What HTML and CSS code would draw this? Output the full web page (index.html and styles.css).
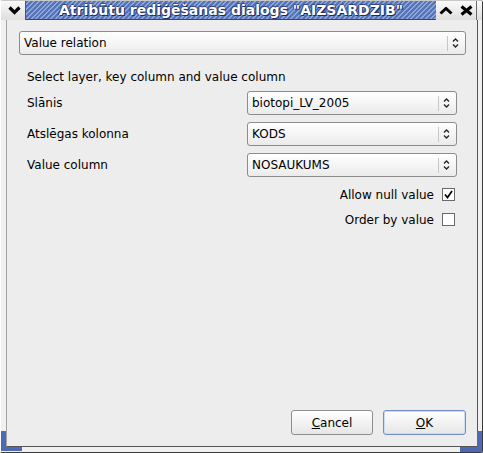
FILE: index.html
```html
<!DOCTYPE html>
<html>

<head>
  <title>Atribūtu rediģēšanas dialogs</title>
  <link rel="stylesheet" href="styles.css">
</head>

<body>
  <div class="window">
    <div class="titlebar">
      <div class="tb-button tb-menu">
        <svg width="13" height="9" viewBox="0 0 13 9">
          <path d="M1.5 1.5 L6.5 6.5 L11.5 1.5" fill="none" stroke="#000" stroke-width="3.2" />
        </svg>
      </div>
      <div class="tb-title">Atribūtu rediģēšanas dialogs "AIZSARDZIB"</div>
      <div class="tb-button">
        <svg width="14" height="8" viewBox="0 0 14 8">
          <path d="M1.5 6.5 L7 1.5 L12.5 6.5" fill="none" stroke="#000" stroke-width="3" />
        </svg>
      </div>
      <div class="tb-button">
        <svg width="13" height="11" viewBox="0 0 13 11">
          <path d="M1.5 1.5 L11.5 9.5 M11.5 1.5 L1.5 9.5" fill="none" stroke="#000" stroke-width="3.2" />
        </svg>
      </div>
      <div class="tb-edge"></div>
    </div>

    <div class="frame">
      <div class="client">
        <div class="combo combo-wide">
          <span class="combo-text">Value relation</span>
          <span class="combo-arrow">
            <svg width="7" height="12" viewBox="0 0 7 12">
              <path d="M1 4.5 L3.5 2 L6 4.5 M1 7.5 L3.5 10 L6 7.5" fill="none" stroke="#222" stroke-width="1.3" />
            </svg>
          </span>
        </div>

        <div class="settings">
          <p class="hint">Select layer, key column and value column</p>

          <div class="field">
            <span class="field-label">Slānis</span>
            <div class="combo">
              <span class="combo-text">biotopi_LV_2005</span>
              <span class="combo-arrow">
                <svg width="7" height="12" viewBox="0 0 7 12">
                  <path d="M1 4.5 L3.5 2 L6 4.5 M1 7.5 L3.5 10 L6 7.5" fill="none" stroke="#222" stroke-width="1.3" />
                </svg>
              </span>
            </div>
          </div>

          <div class="field">
            <span class="field-label">Atslēgas kolonna</span>
            <div class="combo">
              <span class="combo-text">KODS</span>
              <span class="combo-arrow">
                <svg width="7" height="12" viewBox="0 0 7 12">
                  <path d="M1 4.5 L3.5 2 L6 4.5 M1 7.5 L3.5 10 L6 7.5" fill="none" stroke="#222" stroke-width="1.3" />
                </svg>
              </span>
            </div>
          </div>

          <div class="field">
            <span class="field-label">Value column</span>
            <div class="combo">
              <span class="combo-text">NOSAUKUMS</span>
              <span class="combo-arrow">
                <svg width="7" height="12" viewBox="0 0 7 12">
                  <path d="M1 4.5 L3.5 2 L6 4.5 M1 7.5 L3.5 10 L6 7.5" fill="none" stroke="#222" stroke-width="1.3" />
                </svg>
              </span>
            </div>
          </div>

          <div class="checks">
            <div class="check-row">
              Allow null value
              <span class="checkbox">
                <svg width="11" height="11" viewBox="0 0 11 11">
                  <path d="M2 5.5 L4.5 8.5 L9 2" fill="none" stroke="#000" stroke-width="1.7" />
                </svg>
              </span>
            </div>
            <div class="check-row">
              Order by value
              <span class="checkbox"></span>
            </div>
          </div>
        </div>

        <div class="buttons">
          <button class="btn btn-cancel"><u>C</u>ancel</button>
          <button class="btn btn-ok"><u>O</u>K</button>
        </div>
      </div>
    </div>

    <!-- blue resize grips in the bottom corners -->
    <span class="grip grip-left"></span>
    <span class="grip grip-right"></span>
  </div>
</body>

</html>
```

FILE: styles.css
```css
body {
  margin: 0;
  background: #ffffff;
  font-family: "DejaVu Sans", "Liberation Sans", sans-serif;
  font-size: 12px;
  color: #000000;
}

.window {
  position: relative;
  width: 483px;
  height: 453px;
  box-sizing: border-box;
  display: flex;
  flex-direction: column;
  background: #eeeeee;
  border-right: 1px solid #3a3a3a;
  border-bottom: 1px solid #3a3a3a;
  border-radius: 3px 3px 2px 2px;
  overflow: hidden;
}

/* title bar */
.titlebar {
  height: 20px;
  display: flex;
  background: linear-gradient(#fafafa, #dedede);
  border-top: 1px solid #c8c8c8;
  box-sizing: border-box;
}

.tb-button {
  width: 20px;
  display: flex;
  align-items: center;
  justify-content: center;
}

.tb-menu {
  width: 26px;
  border-left: 1px solid #ffffff;
  border-right: 1px solid #555555;
  box-sizing: border-box;
  padding-left: 2px;
}

.tb-title {
  flex: 1;
  height: 18px;
  background: repeating-linear-gradient(135deg, #5674b8 0px, #5674b8 2px, #8ea6da 2px, #8ea6da 3.4px);
  border-bottom: 1px solid #33467a;
  color: #ffffff;
  font-weight: bold;
  font-size: 14px;
  line-height: 18px;
  text-align: center;
  text-shadow: 1px 1px 0 #1c2c5c, -1px 0 1px #2b3f78, 0 -1px 1px #2b3f78;
  white-space: nowrap;
  overflow: hidden;
}

.tb-edge {
  width: 5px;
  border-left: 1px solid #6a6a6a;
}

/* window frame around the client area */
.frame {
  flex: 1;
  display: flex;
  padding: 0 5px 5px 5px;
  background: #f0f0f0;
  border-left: 1px solid #ffffff;
}

.client {
  flex: 1;
  display: flex;
  flex-direction: column;
  background: #ededed;
  border-left: 1px solid #a2a2a2;
  border-right: 1px solid #555555;
  border-bottom: 1px solid #555555;
}

/* combo boxes */
.combo {
  display: flex;
  align-items: center;
  height: 24px;
  box-sizing: border-box;
  border: 1px solid #8c8c8c;
  border-radius: 3px;
  background: linear-gradient(#ffffff, #ebebeb);
}

.combo-text {
  flex: 1;
  padding-left: 4px;
  white-space: nowrap;
}

.combo-arrow {
  width: 15px;
  height: 15px;
  padding-right: 2px;
  border-left: 1px solid #c6c6c6;
  display: flex;
  align-items: center;
  justify-content: center;
}

.combo-wide {
  margin: 11px 11px 0 12px;
}

.settings {
  display: flex;
  flex-direction: column;
  gap: 7px;
  padding: 0 20px;
  margin-top: 13px;
}

.hint {
  margin: 0 0 -1px 0;
  padding-top: 1px;
  line-height: 16px;
}

.field {
  display: grid;
  grid-template-columns: 220px 210px;
  align-items: center;
}

.checks {
  display: flex;
  flex-direction: column;
  align-items: flex-end;
  gap: 8px;
  margin-top: 2px;
}

.check-row {
  display: flex;
  align-items: center;
  gap: 8px;
  height: 17px;
  padding-right: 2px;
}

.checkbox {
  width: 13px;
  height: 13px;
  box-sizing: border-box;
  border: 1px solid #6a6a6a;
  background: #ffffff;
  display: flex;
  align-items: center;
  justify-content: center;
}

/* dialog buttons */
.buttons {
  margin-top: auto;
  display: flex;
  justify-content: flex-end;
  gap: 10px;
  padding: 0 11px 11px 0;
}

.btn {
  height: 25px;
  font-family: inherit;
  font-size: 12px;
  color: #000000;
  border: 1px solid #8e8e8e;
  border-radius: 3px;
  background: linear-gradient(#ffffff, #e6e6e6);
  padding: 0;
}

.btn-cancel {
  width: 82px;
}

.btn-ok {
  width: 83px;
  border-color: #6f90c6;
  box-shadow: inset 0 0 0 1px #cddcf2;
}

.grip {
  position: absolute;
  box-sizing: border-box;
  border-color: #4d6ab2;
  border-style: solid;
}

.grip-left {
  left: 1px;
  bottom: 1px;
  width: 21px;
  height: 20px;
  border-width: 0 0 4px 5px;
}

.grip-right {
  right: 0;
  bottom: 0;
  width: 22px;
  height: 21px;
  border-width: 0 5px 5px 0;
}
```
